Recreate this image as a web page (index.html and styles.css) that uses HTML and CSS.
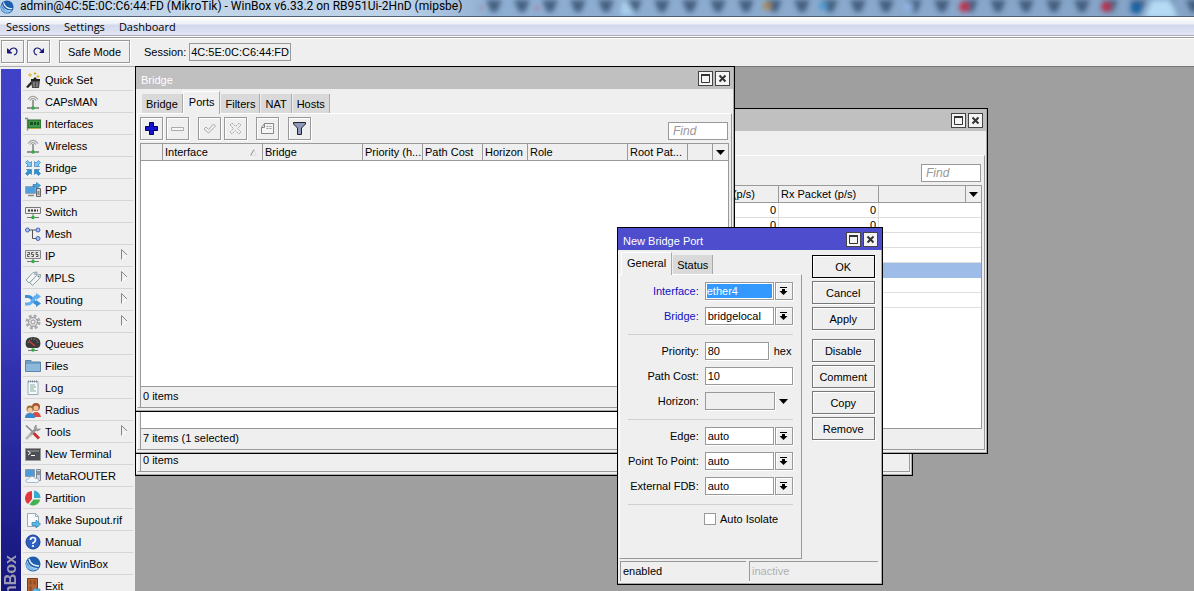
FILE: index.html
```html
<!DOCTYPE html>
<html lang="en">
<head>
<meta charset="utf-8">
<title>WinBox</title>
<link rel="stylesheet" href="styles.css">
</head>
<body>
<svg class="defs" aria-hidden="true">
  <symbol id="antenna" viewBox="0 0 16 16"><path d="M3 5.500Q8-1 13 5.500M5 6.500Q8 2.500 11 6.500" fill="none" stroke="#999" stroke-width="1.200"/><path d="M8 6v8M2 14h12" stroke="#777" stroke-width="1.400"/><circle cx="8" cy="14" r="1.800" fill="#2fae45"/></symbol>
  <symbol id="max" viewBox="0 0 15 15"><path d="M3.500 4.500h8v7h-8z" fill="none" stroke="#333"/><path d="M3 4h9" stroke="#333" stroke-width="2"/></symbol>
  <symbol id="close" viewBox="0 0 15 15"><path d="M4.500 4.500l6 6M10.500 4.500l-6 6" stroke="#333" stroke-width="2"/></symbol>
  <symbol id="down" viewBox="0 0 9 5"><path d="M0 0h9L4.500 5z"/></symbol>
  <symbol id="drop" viewBox="0 0 9 9"><path d="M1 0h7v1H1zM3 2h3v2h2.500L4.500 8 .5 4H3z"/></symbol>
  <symbol id="more" viewBox="0 0 7 11"><path d="M6 6L.5 10.500V.5" fill="none" stroke="#fff"/><path d="M.5 10.500V.5L6 6" fill="none" stroke="#888"/></symbol>
  <symbol id="globe" viewBox="0 0 16 16"><circle cx="8" cy="8" r="7.500" fill="#1f5fae"/><path d="M1 6Q4 13 14 12Q9 17 3 13Q0 10 1 6z" fill="#83b9e8"/><path d="M4 3Q6 10 14 10" fill="none" stroke="#e4f0fb" stroke-width="1.400"/><path d="M2 5Q4 12 12 12.500" fill="none" stroke="#c4def5"/></symbol>
</svg>

<div class="app">
  <header class="titlebar">
    <svg class="glass" aria-hidden="true">
      <defs>
        <filter id="soft"><feGaussianBlur stdDeviation="2.500"/></filter>
        <pattern id="spikes" x="480" width="28" height="24" patternUnits="userSpaceOnUse"><path d="M6 0h16l-5 12h-6z" fill="#2f4867"/></pattern>
      </defs>
      <g filter="url(#soft)">
        <rect x="480" y="-4" width="100%" height="22" fill="url(#spikes)" opacity=".75"/>
        <circle cx="481" cy="8" r="2" fill="#b07b98"/><circle cx="537" cy="8" r="2" fill="#b0708a"/>
        <path d="M622 2l5-1 8 14h-15z" fill="#a8d0ef"/>
        <circle cx="767" cy="6" r="4" fill="#a98a55"/><circle cx="823" cy="6" r="4" fill="#4b9bd2"/>
        <circle cx="908" cy="7" r="5" fill="#8fb3e2"/><circle cx="964" cy="7" r="5" fill="#c2304a"/>
        <circle cx="1106" cy="7" r="5" fill="#b82e4c"/><circle cx="1136" cy="8" r="6" fill="#1e64a0"/>
        <path d="M1152 0h18l8 18h-34z" fill="#b4daf4"/>
      </g>
    </svg>
    <svg class="i16 logo"><use href="#globe"/></svg>
    <span class="caption">admin@4C:5E:0C:C6:44:FD (MikroTik) - WinBox v6.33.2 on RB951Ui-2HnD (mipsbe)</span>
  </header>
  <nav class="menubar"><button>Sessions</button><button>Settings</button><button>Dashboard</button></nav>
  <div class="toolbar">
    <button class="btn sq" aria-label="Undo"><svg viewBox="0 0 13 11" width="13" height="11"><path d="M2 3v4h4M2 7l3-4q3-2 5 0t0 5l-2 1" fill="none" stroke="#181878" stroke-width="1.200"/><path d="M1 2v5h5z" fill="#181878"/></svg></button>
    <button class="btn sq" aria-label="Redo"><svg viewBox="0 0 13 11" width="13" height="11"><path d="M11 7L8 3Q5 1 3 3t0 5l2 1" fill="none" stroke="#181878" stroke-width="1.200"/><path d="M12 2v5H7z" fill="#181878"/></svg></button>
    <button class="btn safe">Safe Mode</button>
    <label for="session">Session:</label>
    <input id="session" class="session" value="4C:5E:0C:C6:44:FD" readonly>
  </div>

  <div class="main">
    <aside class="sidebar">
      <div class="strip"><span>WinBox</span></div>
      <nav class="side">
        <button><svg class="i16" viewBox="0 0 16 16"><path d="M1 15L10 5l2 2-9 9z" fill="#222"/><path d="M6 8h9l-1 8H7z" fill="#4a4a4a"/><path d="M6 7h9v2H6z" fill="#222"/><path d="M9 10v5M12 10v5" stroke="#aaa"/><path d="M5 1v4M3 3h4M10 0v3M8.500 1.500h3M13 3v3M11.500 4.500h3" stroke="#d9b22c"/></svg>Quick Set</button>
        <button><svg class="i16"><use href="#antenna"/></svg>CAPsMAN</button>
        <button><svg class="i16" viewBox="0 0 16 16"><path d="M0 2.500h2.500v12" fill="none" stroke="#888" stroke-width="1.300"/><path d="M3 4h13v8H3z" fill="#3f9a48" stroke="#236b2c"/><path d="M5 6h3v3H5zM9 6h2v3H9zM12 6h2v3h-2z" fill="#1d4d25"/><path d="M5 12.500h9" stroke="#c9b04a" stroke-dasharray="1 1"/></svg>Interfaces</button>
        <button><svg class="i16"><use href="#antenna"/></svg>Wireless</button>
        <button><svg class="i16" viewBox="0 0 16 16"><g stroke="#2374b5" stroke-width=".6"><path d="M6.500 6.500h-5l1.500-1.500L.5 2.500l2-2L5 3l1.500-1.500z" fill="#7cc8f5"/><path d="M9.500 6.500h5L13 5l2.500-2.500-2-2L11 3 9.500 1.500z" fill="#7cc8f5"/><path d="M6.500 9.500h-5L3 11 .5 13.500l2 2L5 13l1.500 1.500z" fill="#2f8fd0"/><path d="M9.500 9.500h5L13 11l2.500 2.500-2 2L11 13l-1.500 1.500z" fill="#2f8fd0"/></g></svg>Bridge</button>
        <button><svg class="i16" viewBox="0 0 16 16"><path d="M.5 4.500h10v7H.5z" fill="#4f9fdc" stroke="#9aa5b0"/><path d="M3 13.500h6" stroke="#888" stroke-width="1.500"/><path d="M11.500 6.500h4v8h-4z" fill="#d5d5d5" stroke="#666"/><path d="M8 2.500h3.500V.5L15.500 3.500l-4 3V4.500H8z" fill="#49a6e4" stroke="#1e6ba4" stroke-width=".6"/><path d="M12.500 10h2M12.500 12h2" stroke="#444"/></svg>PPP</button>
        <button><svg class="i16" viewBox="0 0 16 16"><path d="M.5 3.500h15v6H.5z" fill="#eee" stroke="#777"/><path d="M3 6.500h10" stroke="#333" stroke-width="2" stroke-dasharray="2 1"/><path d="M8 10v4M2 13.500h12" stroke="#777"/><circle cx="8" cy="13.500" r="1.800" fill="#2fae45"/></svg>Switch</button>
        <button><svg class="i16" viewBox="0 0 16 16"><path d="M4 4h8M7.500 4v8.500H12" fill="none" stroke="#555"/><g fill="#a9c2f5" stroke="#4461b8"><circle cx="2.500" cy="4" r="2"/><circle cx="13" cy="4" r="2"/><circle cx="13" cy="12.500" r="2"/></g></svg>Mesh</button>
        <button><svg class="i16" viewBox="0 0 16 16"><path d="M.5 2.500h15v8H.5z" fill="#e6e6e6" stroke="#888"/><path d="M2.500 4.500h2v2h-2v2h2M8.500 4.500h-2v2h2v2h-2M13 4.500h-2v2h2v2h-2" fill="none" stroke="#555"/><path d="M8 11v3M2 13.500h12" stroke="#777"/><circle cx="8" cy="13.500" r="1.800" fill="#2fae45"/></svg>IP<svg class="more"><use href="#more"/></svg></button>
        <button><svg class="i16" viewBox="0 0 16 16"><g fill="#f3f6f7" stroke="#8ba0a5"><path d="M1 10L8 2.500l4-.5-.5 4L4 13z"/><path d="M5 12.500L12 5l3.500-.5L15 8l-7.500 7.500z"/></g><circle cx="10" cy="4" r=".8" fill="#667"/><circle cx="13.500" cy="6.500" r=".8" fill="#667"/></svg>MPLS<svg class="more"><use href="#more"/></svg></button>
        <button><svg class="i16" viewBox="0 0 16 16"><path d="M0 4.500h3Q6 4.500 8 8t4 3.500" fill="none" stroke="#3c8fd4" stroke-width="3"/><path d="M0 12h3q3 0 5-4t4-3.500" fill="none" stroke="#5fb0ee" stroke-width="3"/><path d="M11 1l5 3.500L11 8z" fill="#5fb0ee"/><path d="M11 8l5 3.500-5 3.500z" fill="#3c8fd4"/></svg>Routing<svg class="more"><use href="#more"/></svg></button>
        <button><svg class="i16" viewBox="0 0 16 16"><circle cx="8" cy="8" r="6" fill="none" stroke="#aaa" stroke-width="3" stroke-dasharray="2.700 2"/><circle cx="8" cy="8" r="4.500" fill="#ddd" stroke="#999"/><circle cx="8" cy="8" r="2" fill="#eee" stroke="#999"/></svg>System<svg class="more"><use href="#more"/></svg></button>
        <button><svg class="i16" viewBox="0 0 16 16"><path d="M1 10Q-1 1 8 1t7 9q-1 2-3 2H4q-2 0-3-2z" fill="#3a3a3a"/><path d="M3 7q1-4 5-4t5 4" fill="none" stroke="#aaa" stroke-dasharray="1 1.500"/><path d="M4 5l6 5" stroke="#e03838" stroke-width="1.300"/><path d="M3 14.500h10" stroke="#777"/><circle cx="8" cy="14" r="1.800" fill="#2fae45"/></svg>Queues</button>
        <button><svg class="i16" viewBox="0 0 16 16"><path d="M.5 13.500v-11H6L7.500 4h8v9.500z" fill="#6f9fc6" stroke="#5a86a8"/><path d="M1 6h14v7H1z" fill="#8db8d9"/></svg>Files</button>
        <button><svg class="i16" viewBox="0 0 16 16"><path d="M3 1.500h10v13H3z" fill="#f5f9f7" stroke="#9ab"/><path d="M5 5h5M5 7h6M5 9h4M5 11h6" stroke="#8bb0a4"/><path d="M3 1.500h10" stroke="#789" stroke-width="2" stroke-dasharray="1 1"/></svg>Log</button>
        <button><svg class="i16" viewBox="0 0 16 16"><circle cx="11" cy="5" r="4" fill="#a5522a"/><circle cx="11" cy="6" r="2.600" fill="#f0bf94"/><path d="M7 15q0-5 4-5t5 5z" fill="#d84b42"/><circle cx="5" cy="7" r="3.400" fill="#9a6a35"/><circle cx="5" cy="8" r="2.500" fill="#f4c9a0"/><path d="M0 16q0-5 5-5t5 5z" fill="#3b87cc"/></svg>Radius</button>
        <button><svg class="i16" viewBox="0 0 16 16"><path d="M1 1.500l8 7.500" stroke="#888" stroke-width="1.700"/><path d="M8.500 9l5.500 5.500" stroke="#c8302c" stroke-width="3"/><path d="M5 11l6-6" stroke="#999" stroke-width="2.600"/><path d="M1 15l5-5" stroke="#b8b8b8" stroke-width="2.600"/><path d="M11 1Q8.500 3 10 6q3 2 5.500-1l-3 .2-1.200-1.500z" fill="#aaa" stroke="#777" stroke-width=".6"/></svg>Tools<svg class="more"><use href="#more"/></svg></button>
        <button><svg class="i16" viewBox="0 0 16 16"><path d="M.5 2.500h15v12H.5z" fill="#4b4f55" stroke="#999"/><path d="M2 4h12v2H2z" fill="#777"/><path d="M3 5l2.500 2L3 9M6 9.500h4" fill="none" stroke="#fff"/></svg>New Terminal</button>
        <button><svg class="i16" viewBox="0 0 16 16"><path d="M.5 1.500h9v7h-9z" fill="#4b9bda" stroke="#8a98a5"/><path d="M11.500 1.500h4v11h-4z" fill="#ccd2d8" stroke="#7d8994"/><path d="M12 4h3M12 6h3" stroke="#456"/><path d="M3 14.500q-3 0-2-2.500 1-1.500 2.500-1 1-3 4-2.500 2 .5 2.500 2 4-.5 4 2 0 2-2.500 2z" fill="#f4f7fb" stroke="#9ab" stroke-width=".8"/></svg>MetaROUTER</button>
        <button><svg class="i16" viewBox="0 0 16 16"><path d="M7 9V1A7.200 7.200 0 0 0 3 14z" fill="#e2383d"/><path d="M9 8V.5A7 7 0 0 1 15.500 8z" fill="#3ba9cf"/><path d="M8.500 9.500H15A7 7 0 0 1 4.500 14.500z" fill="#45b153"/></svg>Partition</button>
        <button><svg class="i16" viewBox="0 0 16 16"><path d="M2.500 1.500h8l3 3v10h-11z" fill="#f6fafa" stroke="#9ab"/><path d="M10.500 1.500v3h3" fill="none" stroke="#9ab"/><path d="M7 10.500h4V8l4.500 4-4.500 4v-2.500H7z" fill="#5cb7e6" stroke="#2a7fae" stroke-width=".7"/></svg>Make Supout.rif</button>
        <button><svg class="i16" viewBox="0 0 16 16"><circle cx="8" cy="8" r="7" fill="#2e5ec2" stroke="#173f91"/><path d="M5.500 6q0-2.500 2.500-2.500t2.500 2.200T8 9v1" fill="none" stroke="#fff" stroke-width="1.700"/><circle cx="8" cy="12" r="1.100" fill="#fff"/></svg>Manual</button>
        <button><svg class="i16"><use href="#globe"/></svg>New WinBox</button>
        <button><svg class="i16" viewBox="0 0 16 16"><path d="M2.500.5h10v15h-10z" fill="#b56632" stroke="#7a3d17"/><path d="M4.500 2.500h2v4h-2zM8.500 2.500h2v4h-2zM4.500 8.500h2v5h-2z" fill="#8c4a20"/><path d="M15 11h-4V9l-3.500 3.500L11 16v-2h4z" fill="#5cb7e6" stroke="#2a7fae" stroke-width=".6"/></svg>Exit</button>
      </nav>
    </aside>

    <main class="desk">
      <section class="win w3">
        <div class="cap"></div>
        <div class="panel top"><div class="grid"></div><div class="count">0 items</div></div>
      </section>

      <section class="win w2">
        <div class="cap"><span></span><button class="cb" aria-label="Maximize"><svg><use href="#max"/></svg></button><button class="cb" aria-label="Close"><svg><use href="#close"/></svg></button></div>
        <div class="tabs"></div>
        <div class="panel">
          <div class="tools"><input class="find" placeholder="Find" aria-label="Find"></div>
          <div class="grid">
            <table>
              <colgroup><col><col class="c100"><col class="c100"><col class="c87"><col class="c15"></colgroup>
              <thead><tr><th></th><th>Tx Packet (p/s)</th><th>Rx Packet (p/s)</th><th></th><th class="pick"><svg><use href="#down"/></svg></th></tr></thead>
              <tbody>
                <tr><td></td><td>0</td><td>0</td><td colspan="2"></td></tr>
                <tr><td></td><td>0</td><td>0</td><td colspan="2"></td></tr>
                <tr><td></td><td></td><td></td><td colspan="2"></td></tr>
                <tr><td></td><td></td><td></td><td colspan="2"></td></tr>
                <tr class="sel"><td></td><td></td><td></td><td colspan="2"></td></tr>
                <tr><td></td><td></td><td></td><td colspan="2"></td></tr>
                <tr><td></td><td></td><td></td><td colspan="2"></td></tr>
              </tbody>
            </table>
          </div>
          <div class="count">7 items (1 selected)</div>
        </div>
      </section>

      <section class="win w1">
        <div class="cap"><span>Bridge</span><button class="cb" aria-label="Maximize"><svg><use href="#max"/></svg></button><button class="cb" aria-label="Close"><svg><use href="#close"/></svg></button></div>
        <div class="tabs"><button>Bridge</button><button class="on">Ports</button><button>Filters</button><button>NAT</button><button>Hosts</button></div>
        <div class="panel">
          <div class="tools">
            <button class="btn sq" aria-label="Add"><svg viewBox="0 0 13 13" width="13" height="13"><path d="M4.500.5h4v4h4v4h-4v4h-4v-4h-4v-4h4z" fill="#1414d0" stroke="#000050"/></svg></button>
            <button class="btn sq" aria-label="Remove"><svg viewBox="0 0 13 13" width="13" height="13"><path d="M.5 5.500h12v3H.5z" fill="#f6f6f6" stroke="#aaa"/></svg></button>
            <button class="btn sq far" aria-label="Enable"><svg viewBox="0 0 13 13" width="13" height="13"><path d="M1 7l2-2 2.500 2.500L10.500 2 12.500 4l-7 7z" fill="none" stroke="#aaa"/></svg></button>
            <button class="btn sq" aria-label="Disable"><svg viewBox="0 0 13 13" width="13" height="13"><path d="M1 3l2-2 3.500 3.500L10 1l2 2-3.500 3.500L12 10l-2 2-3.500-3.500L3 12l-2-2 3.500-3.500z" fill="none" stroke="#aaa" stroke-dasharray="2 .7"/></svg></button>
            <button class="btn sq far" aria-label="Comment"><svg viewBox="0 0 13 13" width="13" height="13"><path d="M3.500 1.500h9v10H.5v-6z M.5 5.500h3v-4" fill="#f4f4f4" stroke="#888"/><path d="M5.500 4.500h5M5.500 6.500h5" stroke="#999" stroke-dasharray="2 1"/></svg></button>
            <button class="btn sq far" aria-label="Filter"><svg viewBox="0 0 13 13" width="13" height="13"><path d="M.5.5h12v1.500L8.500 6v6.500h-4V6L.5 2z" fill="#8f98bd" stroke="#222"/></svg></button>
            <input class="find" placeholder="Find" aria-label="Find">
          </div>
          <div class="grid">
            <table>
              <colgroup><col class="c22"><col class="c100"><col class="c100"><col class="c60"><col class="c60"><col class="c45"><col class="c100"><col class="c60"><col><col class="c15"></colgroup>
              <thead><tr><th></th><th class="sort"><div>Interface<svg viewBox="0 0 7 7" width="7" height="7"><path d="M.5 6.500L4 .5" stroke="#888"/><path d="M4 .5l2.500 6h-6" fill="none" stroke="#ddd"/></svg></div></th><th>Bridge</th><th>Priority (h...</th><th>Path Cost</th><th>Horizon</th><th>Role</th><th>Root Pat...</th><th></th><th class="pick"><svg><use href="#down"/></svg></th></tr></thead>
            </table>
          </div>
          <div class="count">0 items</div>
        </div>
      </section>

      <section class="win dlg">
        <div class="cap"><span>New Bridge Port</span><button class="cb" aria-label="Maximize"><svg><use href="#max"/></svg></button><button class="cb" aria-label="Close"><svg><use href="#close"/></svg></button></div>
        <div class="cols">
          <div class="left">
            <div class="tabs"><button class="on">General</button><button>Status</button></div>
            <form class="form">
              <div class="row must"><label for="if">Interface:</label><select id="if" class="hot"><option>ether4</option></select><button type="button" class="btn dd" aria-label="Choose interface"><svg><use href="#drop"/></svg></button></div>
              <div class="row must"><label for="br">Bridge:</label><select id="br"><option>bridgelocal</option></select><button type="button" class="btn dd" aria-label="Choose bridge"><svg><use href="#drop"/></svg></button></div>
              <hr>
              <div class="row"><label for="pr">Priority:</label><input id="pr" class="short" value="80"><span class="unit">hex</span></div>
              <div class="row"><label for="pc">Path Cost:</label><input id="pc" class="wide" value="10"></div>
              <div class="row"><label for="hz">Horizon:</label><input id="hz" class="off"><button type="button" class="open" aria-label="Set horizon"><svg><use href="#down"/></svg></button></div>
              <hr>
              <div class="row"><label for="ed">Edge:</label><select id="ed"><option>auto</option></select><button type="button" class="btn dd" aria-label="Choose edge"><svg><use href="#drop"/></svg></button></div>
              <div class="row"><label for="pp">Point To Point:</label><select id="pp"><option>auto</option></select><button type="button" class="btn dd" aria-label="Choose point to point"><svg><use href="#drop"/></svg></button></div>
              <div class="row"><label for="ex">External FDB:</label><select id="ex"><option>auto</option></select><button type="button" class="btn dd" aria-label="Choose external FDB"><svg><use href="#drop"/></svg></button></div>
              <hr>
              <div class="check"><input id="ai" type="checkbox"><label for="ai">Auto Isolate</label></div>
            </form>
          </div>
          <div class="acts">
            <button class="btn def">OK</button><button class="btn">Cancel</button><button class="btn">Apply</button>
            <button class="btn gap">Disable</button><button class="btn">Comment</button><button class="btn">Copy</button><button class="btn">Remove</button>
          </div>
        </div>
        <div class="state"><span>enabled</span><span class="dim">inactive</span></div>
      </section>
    </main>
  </div>
</div>
</body>
</html>
```
FILE: styles.css
```css
* { box-sizing: border-box; }
body { margin: 0; color: #000; font: 11px/14px "Liberation Sans", Arial, sans-serif; }
button, input, select { font: inherit; color: inherit; margin: 0; padding: 0; border: 0; border-radius: 0; background: none; }
select { appearance: none; }
.defs { position: absolute; width: 0; height: 0; }
.i16 { width: 16px; height: 16px; flex: none; }
.app { height: 100vh; display: flex; flex-direction: column; overflow: hidden; background: #efefef; }

.titlebar { position: relative; flex: none; height: 17px; display: flex; align-items: flex-start; gap: 5px; border-bottom: 1px solid #4d6078; background: linear-gradient(90deg, #c6d8ea, #bdd2e8 400px, #8fafd2 490px, #85a3c6); }
.glass { position: absolute; inset: 0; width: 100%; height: 100%; }
.logo { position: relative; margin-left: -1px; height: 14px; }
.caption { position: relative; font: 12px/13px Roboto, sans-serif; white-space: nowrap; }
.menubar { flex: none; height: 21px; display: flex; gap: 14px; padding: 0 6px 1px; font: 11px/18px "Open Sans", sans-serif; background: linear-gradient(#fff, #eceff5 7px, #d3d9ed 8px, #e1e5f4 18px, #aab 18px, #aab 19px, #fff 19px, #fff 20px, #999 20px); }
.toolbar { flex: none; height: 28px; display: flex; align-items: center; gap: 3px; padding: 0 1px 2px; border-top: 1px solid #fff; }
.toolbar label { margin-left: 11px; }
.btn { display: flex; flex: none; align-items: center; justify-content: center; height: 23px; background: #efefef; border: 1px solid #999; box-shadow: inset 1px 1px #fff, 1px 1px #fff; }
.sq { width: 23px; }
.safe { width: 71px; margin-left: 6px; }
.session { width: 102px; height: 18px; padding: 0 1px; border: 1px solid #999; }

.main { flex: 1; min-height: 0; display: flex; }
.sidebar { flex: none; width: 135px; display: flex; gap: 2px; padding: 2px 2px 0 1px; overflow: hidden; border-top: 1px solid #aaa; }
.strip { flex: none; width: 20px; display: flex; flex-direction: column; justify-content: flex-end; align-items: center; overflow: hidden; background: linear-gradient(#4040c8, #3a3ac0 45%, #16167c); }
.strip span { margin-bottom: -23px; writing-mode: vertical-rl; transform: rotate(180deg); font: bold 16px/18px "Liberation Sans", sans-serif; color: #9b9bb4; }
.side { flex: 1; display: flex; flex-direction: column; }
.side button { flex: none; height: 22px; display: flex; align-items: center; gap: 4px; padding: 1px 5px 0 2px; border-bottom: 1px solid #d6d6d6; text-align: left; white-space: nowrap; }
.more { width: 7px; height: 11px; margin-left: auto; margin-bottom: 4px; }

.desk { position: relative; flex: 1; overflow: hidden; background: #9f9f9f; box-shadow: inset 0 1px #777; }
.win { position: absolute; display: flex; flex-direction: column; padding: 0 2px 3px 1px; background: #efefef; border: 1px solid #000; box-shadow: inset -1px -1px #aaa; }
.w1 { left: 0; top: 0; width: 600px; height: 346px; }
.w2 { left: 0; top: 42px; width: 853px; height: 346px; }
.w3 { left: 0; top: 64px; width: 778px; height: 346px; }
.dlg { left: 482px; top: 161px; width: 266px; height: 358px; padding-right: 3px; }
.cap { flex: none; height: 22px; margin: 0 -1px; padding: 0 3px 0 5px; display: flex; align-items: center; gap: 2px; color: #fff; background: #c0c0c0; }
.cap span { flex: 1; padding-top: 3px; }
.dlg .cap { margin: 0 -3px 0 -1px; padding-right: 4px; background: #4d4dcd; }
.cb { width: 15px; height: 15px; background: #f4f4f4; border: 1px solid #444; display: flex; }
.cb svg { flex: none; width: 15px; height: 15px; margin: -1px; }
.tabs { flex: none; height: 24px; padding-left: 4px; display: flex; align-items: flex-end; }
.tabs button { height: 19px; padding: 0 4px; background: #d9d9d9; border-right: 1px solid #aaa; border-left: 1px solid #efefef; }
.tabs .on { height: 23px; margin-bottom: -1px; padding: 0 5px 3px; background: #efefef; border-left: 1px solid #fff; border-top: 1px solid #fff; z-index: 1; }
.panel { flex: 1; min-height: 0; display: flex; flex-direction: column; padding: 0 2px; border: 1px solid #999; border-left-color: #fff; border-top-color: #fff; }
.tools { flex: none; height: 29px; display: flex; align-items: center; gap: 3px; }
.far { margin-left: 6px; }
.find { width: 60px; height: 18px; margin: 4px 1px 0 auto; padding: 0 4px; font-size: 12px; font-style: italic; background: #fff; border: 1px solid #999; }
.find::placeholder { color: #999; opacity: 1; }
.grid { flex: 1; min-height: 0; background: #fff; border: 1px solid #999; }
.count { flex: none; height: 20px; padding: 2px; border-left: 1px solid #999; }
table { width: 100%; table-layout: fixed; border-collapse: separate; border-spacing: 0; }
th, td { padding: 0 2px; white-space: nowrap; overflow: hidden; border-right: 1px solid #999; }
th { height: 17px; text-align: left; font-weight: normal; line-height: 16px; background: #efefef; border-bottom: 1px solid #999; }
td { height: 15px; text-align: right; line-height: 14px; border-bottom: 1px solid #ddd; border-right-color: #ddd; }
th:last-child, td:last-child { border-right: 0; }
.sort div { display: flex; align-items: center; justify-content: space-between; padding-right: 3px; }
.pick svg { display: block; width: 9px; height: 5px; margin-left: 1px; }
.sel td { background: #9dbde8; border-color: #9dbde8; }
.c15 { width: 15px; } .c22 { width: 22px; } .c45 { width: 45px; } .c60 { width: 60px; } .c87 { width: 87px; } .c100 { width: 100px; }

.cols { flex: 1; display: flex; gap: 10px; }
.left { flex: 1; display: flex; flex-direction: column; }
.dlg .tabs { padding-left: 2px; }
.form { flex: 1; display: flex; flex-direction: column; gap: 7px; padding: 7px 8px; border: 1px solid #999; border-top-color: #fff; border-left-color: #fff; }
.row { display: flex; align-items: center; height: 18px; }
.row label { flex: 1; padding-right: 6px; text-align: right; white-space: nowrap; }
.must label { color: #1010c0; }
.row input, .row select { flex: none; width: 69px; height: 18px; padding: 1px 2px; background: #fff; border: 1px solid #999; box-shadow: 1px 1px #fff; }
.row .hot { padding: 1px; color: #fff; background: linear-gradient(#39f, #39f) content-box, #fff; }
.row .short { width: 64px; }
.row .wide { width: 88px; }
.row .off { width: 70px; background: #efefef; }
.unit { width: 24px; padding-left: 5px; }
.dd { width: 18px; height: 18px; margin-left: 1px; }
.dd svg { width: 9px; height: 9px; }
.open { width: 18px; display: flex; justify-content: center; }
.open svg { width: 9px; height: 5px; }
.form hr { width: 100%; height: 1px; margin: 2px 0 0; border: 0; background: #d0d0d0; }
.check { display: flex; align-items: center; gap: 4px; padding-left: 76px; }
.check input { appearance: none; width: 12px; height: 12px; background: #fff; border: 1px solid #999; }
.acts { flex: none; width: 68px; padding: 5px 5px 0 0; display: flex; flex-direction: column; gap: 3px; }
.acts .btn { border-color: #777; }
.acts .def { border-color: #000; }
.acts .gap { margin-top: 6px; }
.state { flex: none; display: flex; gap: 3px; padding: 2px 1px 0; }
.state span { flex: 0 0 126px; height: 20px; padding: 2px; border-top: 1px solid #999; border-left: 1px solid #999; }
.state .dim { flex: 1; color: #b0b0b0; }
```
